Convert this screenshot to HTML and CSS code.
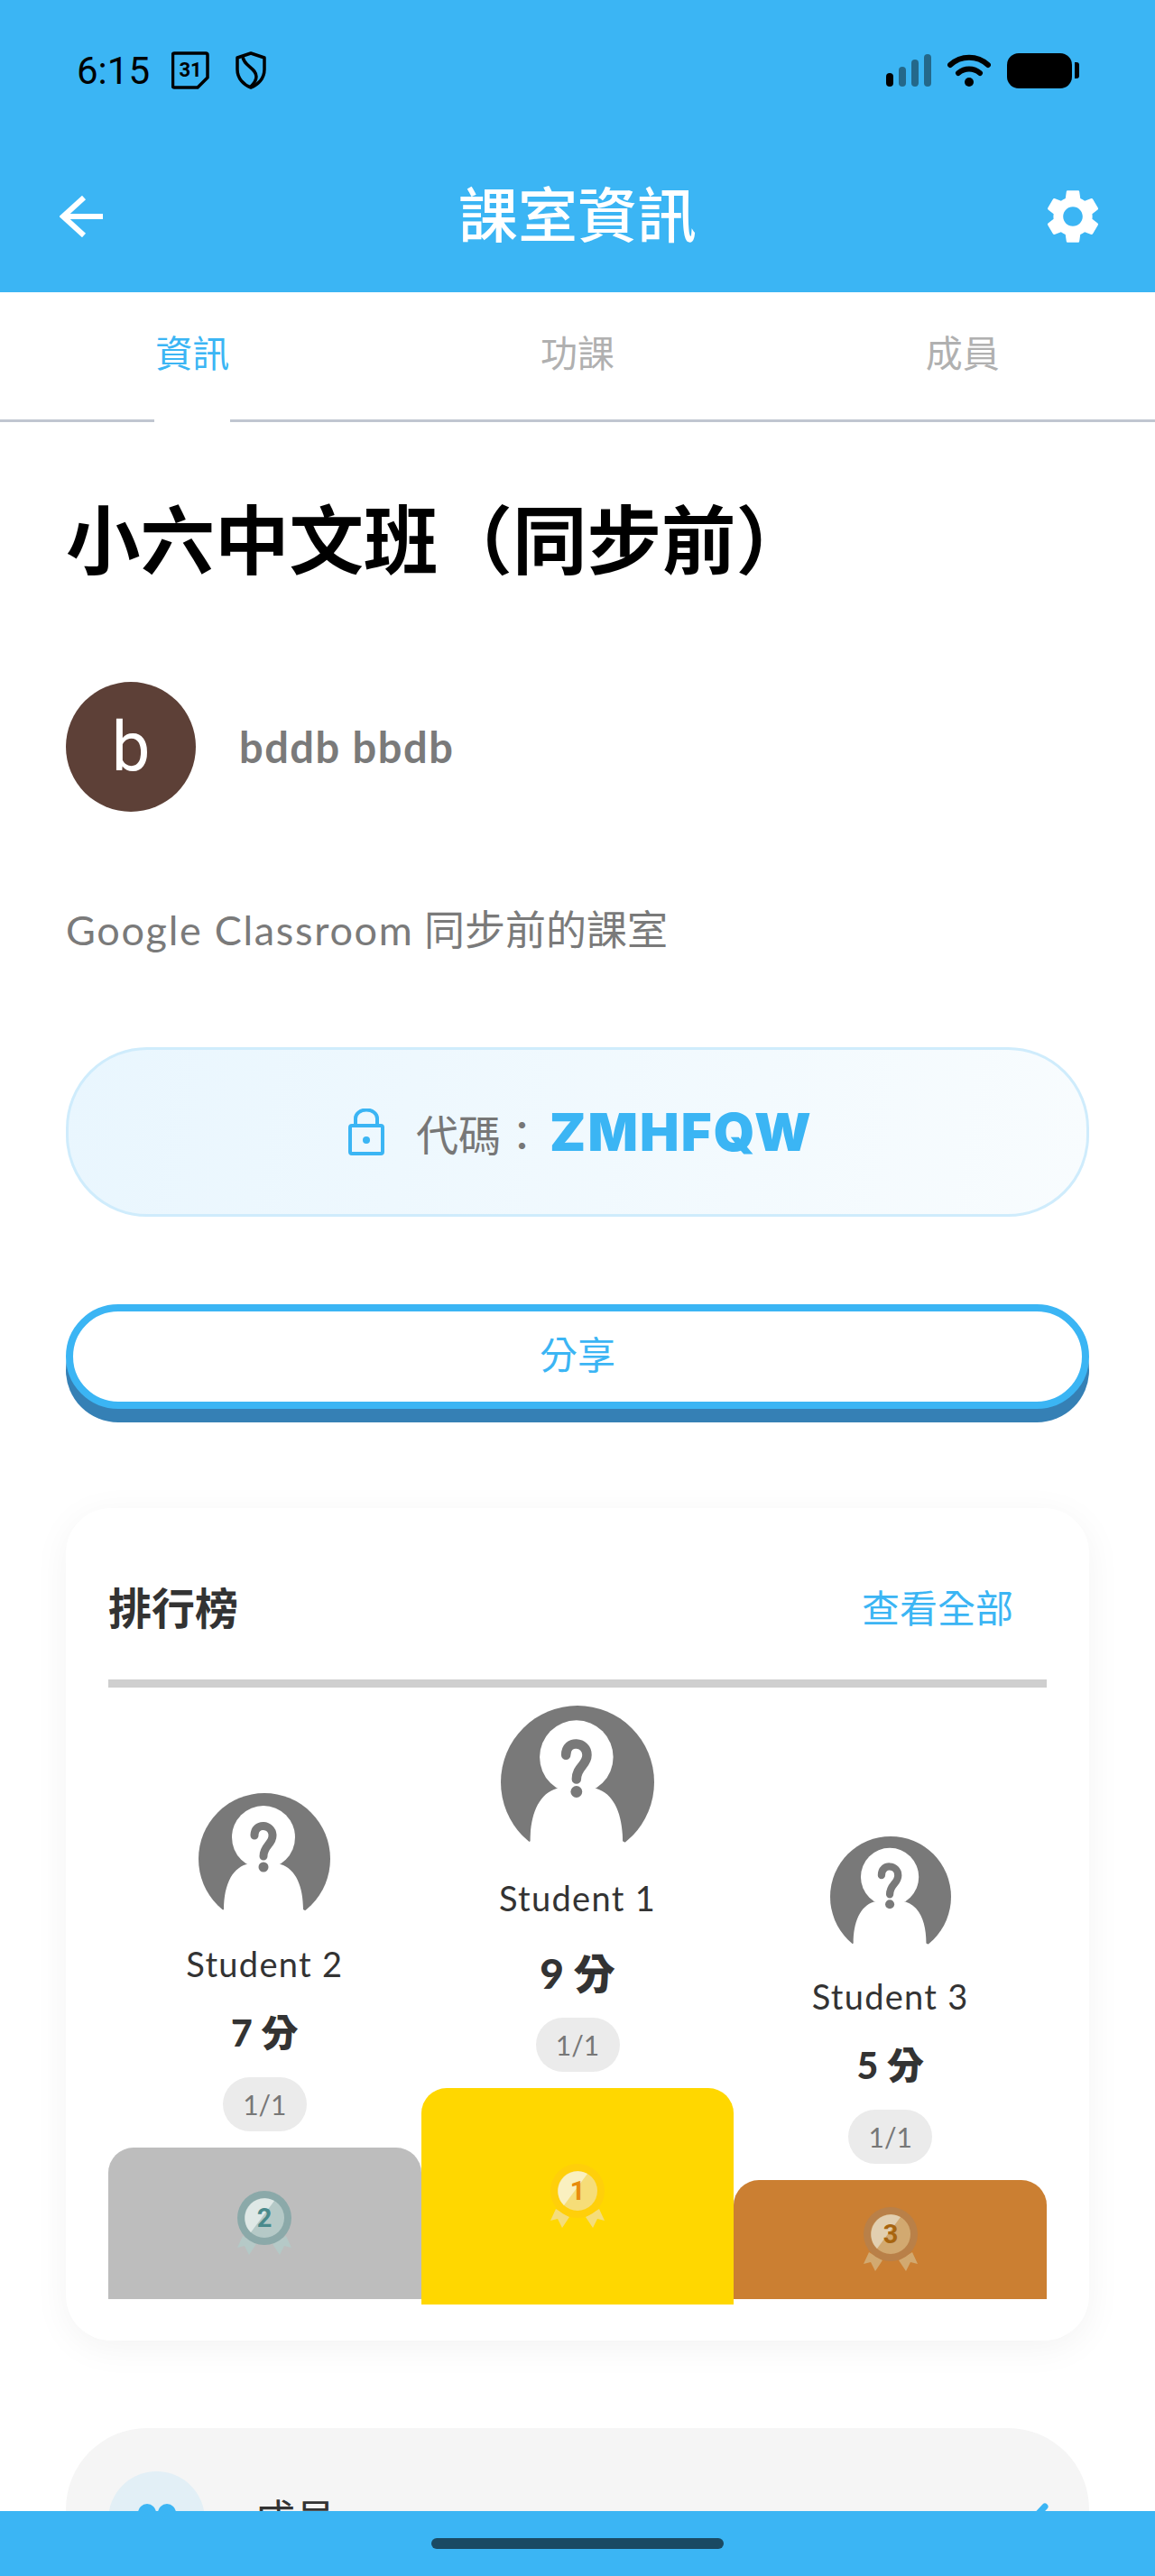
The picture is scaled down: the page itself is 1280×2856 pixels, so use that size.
FILE: index.html
```html
<!DOCTYPE html>
<html lang="zh-Hant">
<head>
    <meta charset="UTF-8">
    <meta name="viewport" content="width=device-width, initial-scale=1.0">
    <title>課室資訊</title>
    <link rel="stylesheet" href="styles.css">
</head>
<body>
    <header class="topbar">
        <div class="status">
            <div class="status-left">
                <span class="clock">6:15</span>
                <svg class="cal-icon" viewBox="0 0 42 42">
                    <path d="M3 2h35a2 2 0 0 1 2 2v25L29 40H3a1.500 1.500 0 0 1-1.500-1.500V3.500A1.500 1.500 0 0 1 3 2z" fill="none" stroke="#000" stroke-width="3.500" stroke-linejoin="round"/>
                    <text x="21" y="28" text-anchor="middle" class="cal-text">31</text>
                </svg>
                <svg class="shield-icon" viewBox="0 0 36 42">
                    <path d="M18 2 L33 7 V20 C33 30 26 37 18 40 C10 37 3 30 3 20 V7 Z" fill="none" stroke="#000" stroke-width="3.500" stroke-linejoin="round"/>
                    <path d="M9 5 C9 16 24 18 24 28 C24 32 21 36 18 39" fill="none" stroke="#000" stroke-width="3.500"/>
                </svg>
            </div>
            <div class="status-right">
                <div class="signal">
                    <span class="bar bar-a"></span>
                    <span class="bar bar-b"></span>
                    <span class="bar bar-c"></span>
                    <span class="bar bar-d"></span>
                </div>
                <svg class="wifi-icon" viewBox="0 0 48 38">
                    <path d="M3 13 C15 2 33 2 45 13" fill="none" stroke="#000" stroke-width="6" stroke-linecap="round"/>
                    <path d="M12 22 C19 16 29 16 36 22" fill="none" stroke="#000" stroke-width="6" stroke-linecap="round"/>
                    <circle cx="24" cy="32" r="5"/>
                </svg>
                <div class="battery"></div>
                <div class="battery-tip"></div>
            </div>
        </div>
        <div class="appbar">
            <svg class="back-icon" viewBox="0 0 48 46">
                <path d="M48 23H5M27 2 4 23l23 21" fill="none" stroke="#fff" stroke-width="6"/>
            </svg>
            <h1 class="appbar-title">課室資訊</h1>
            <svg class="gear-icon" viewBox="0 0 24 24">
                <path fill="#fff" d="M19.140 12.940c.04-.3.06-.61.06-.94 0-.32-.02-.64-.07-.94l2.030-1.580c.18-.14.23-.41.12-.61l-1.920-3.320c-.12-.22-.37-.29-.59-.22l-2.390.96c-.5-.38-1.030-.7-1.620-.94l-.36-2.540c-.04-.24-.24-.41-.48-.41h-3.840c-.24 0-.43.17-.47.41l-.36 2.540c-.59.24-1.130.57-1.620.94l-2.390-.96c-.22-.08-.47 0-.59.22L2.740 8.870c-.12.21-.08.47.12.61l2.030 1.580c-.05.3-.09.63-.09.94s.02.64.07.94l-2.030 1.580c-.18.14-.23.41-.12.61l1.920 3.320c.12.22.37.29.59.22l2.390-.96c.5.38 1.030.7 1.620.94l.36 2.540c.05.24.24.41.48.41h3.840c.24 0 .44-.17.47-.41l.36-2.540c.59-.24 1.130-.56 1.620-.94l2.390.96c.22.08.47 0 .59-.22l1.920-3.320c.12-.22.07-.47-.12-.61l-2.010-1.580zM12 15.600c-1.980 0-3.600-1.620-3.600-3.600s1.620-3.600 3.600-3.600 3.600 1.620 3.600 3.600-1.620 3.600-3.600 3.600z"/>
            </svg>
        </div>
    </header>

    <nav class="tabs">
        <div class="tab active">資訊</div>
        <div class="tab">功課</div>
        <div class="tab">成員</div>
    </nav>

    <main class="content">
        <h2 class="class-title">小六中文班（同步前）</h2>

        <div class="owner">
            <div class="owner-avatar">b</div>
            <div class="owner-name">bddb bbdb</div>
        </div>

        <p class="desc"><span class="latin">Google Classroom</span> 同步前的課室</p>

        <div class="code-box">
            <svg class="lock-icon" viewBox="0 0 40 52">
                <path d="M8 19V11a12 9.500 0 0 1 24 0v8" fill="none" stroke="#3bb5f4" stroke-width="4"/>
                <rect x="2" y="19" width="36" height="31" rx="2" fill="none" stroke="#3bb5f4" stroke-width="4"/>
                <circle cx="20" cy="35" r="4" fill="#3bb5f4"/>
            </svg>
            <span class="code-label">代碼：</span>
            <span class="code-value">ZMHFQW</span>
        </div>

        <button class="share-btn">分享</button>

        <section class="board">
            <div class="board-head">
                <span class="board-title">排行榜</span>
                <span class="board-all">查看全部</span>
            </div>
            <div class="podium">
                <div class="place">
                    <svg class="student-pic pic-2" viewBox="0 0 146 146">
                        <circle cx="73" cy="73" r="73" fill="#797979"/>
                        <path d="M28 129C28 104 36 84 53 79H91C108 84 116 104 116 129L146 146H0Z" fill="#fff"/>
                        <circle cx="72" cy="49" r="35" fill="#fff"/>
                        <path d="M62 47C62 32 82 34 82 47 82 57 72 58 72 70" fill="none" stroke="#797979" stroke-width="9" stroke-linecap="round"/>
                        <circle cx="72" cy="82" r="5.500" fill="#797979"/>
                    </svg>
                    <div class="student-name">Student 2</div>
                    <div class="score">7 分</div>
                    <div class="done">1/1</div>
                    <div class="step step-silver">
                        <svg class="medal" viewBox="0 0 60 72">
                            <path class="m-ribbon" d="M6 50 0 63l8-2 5 10 8-12zM54 50l6 13-8-2-5 10-8-12z"/>
                            <circle class="m-ring" cx="30" cy="30" r="30"/>
                            <circle class="m-face" cx="30" cy="30" r="22"/>
                            <path class="m-shine" d="M41 11A22 22 0 0 0 15 46Z"/>
                            <text class="m-num" x="30" y="40" text-anchor="middle">2</text>
                        </svg>
                    </div>
                </div>
                <div class="place place-first">
                    <svg class="student-pic pic-1" viewBox="0 0 146 146">
                        <circle cx="73" cy="73" r="73" fill="#797979"/>
                        <path d="M28 129C28 104 36 84 53 79H91C108 84 116 104 116 129L146 146H0Z" fill="#fff"/>
                        <circle cx="72" cy="49" r="35" fill="#fff"/>
                        <path d="M62 47C62 32 82 34 82 47 82 57 72 58 72 70" fill="none" stroke="#797979" stroke-width="9" stroke-linecap="round"/>
                        <circle cx="72" cy="82" r="5.500" fill="#797979"/>
                    </svg>
                    <div class="student-name">Student 1</div>
                    <div class="score">9 分</div>
                    <div class="done">1/1</div>
                    <div class="step step-gold">
                        <svg class="medal" viewBox="0 0 60 72">
                            <path class="m-ribbon" d="M6 50 0 63l8-2 5 10 8-12zM54 50l6 13-8-2-5 10-8-12z"/>
                            <circle class="m-ring" cx="30" cy="30" r="30"/>
                            <circle class="m-face" cx="30" cy="30" r="22"/>
                            <path class="m-shine" d="M41 11A22 22 0 0 0 15 46Z"/>
                            <text class="m-num" x="30" y="40" text-anchor="middle">1</text>
                        </svg>
                    </div>
                </div>
                <div class="place">
                    <svg class="student-pic pic-3" viewBox="0 0 146 146">
                        <circle cx="73" cy="73" r="73" fill="#797979"/>
                        <path d="M28 129C28 104 36 84 53 79H91C108 84 116 104 116 129L146 146H0Z" fill="#fff"/>
                        <circle cx="72" cy="49" r="35" fill="#fff"/>
                        <path d="M62 47C62 32 82 34 82 47 82 57 72 58 72 70" fill="none" stroke="#797979" stroke-width="9" stroke-linecap="round"/>
                        <circle cx="72" cy="82" r="5.500" fill="#797979"/>
                    </svg>
                    <div class="student-name">Student 3</div>
                    <div class="score">5 分</div>
                    <div class="done">1/1</div>
                    <div class="step step-bronze">
                        <svg class="medal" viewBox="0 0 60 72">
                            <path class="m-ribbon" d="M6 50 0 63l8-2 5 10 8-12zM54 50l6 13-8-2-5 10-8-12z"/>
                            <circle class="m-ring" cx="30" cy="30" r="30"/>
                            <circle class="m-face" cx="30" cy="30" r="22"/>
                            <path class="m-shine" d="M41 11A22 22 0 0 0 15 46Z"/>
                            <text class="m-num" x="30" y="40" text-anchor="middle">3</text>
                        </svg>
                    </div>
                </div>
            </div>
        </section>

        <section class="members">
            <div class="members-icon">
                <svg viewBox="0 0 60 40" class="people-icon">
                    <circle cx="19" cy="13" r="10" fill="#3bb5f4"/>
                    <circle cx="41" cy="13" r="10" fill="#3bb5f4"/>
                </svg>
            </div>
            <span class="members-label">成員</span>
            <svg class="chevron" viewBox="0 0 30 50">
                <path d="M24 5 5 25l19 20" fill="none" stroke="#3bb5f4" stroke-width="7" stroke-linecap="round"/>
            </svg>
        </section>
    </main>

    <footer class="navbar">
        <div class="handle"></div>
    </footer>
</body>
</html>
```

FILE: styles.css
```css
* {
    box-sizing: border-box;
}
body {
    margin: 0;
    height: 100vh;
    overflow: hidden;
    display: flex;
    flex-direction: column;
    background-color: #fff;
    font-family: Lato, "Noto Sans CJK TC", sans-serif;
}
.topbar {
    background-color: #3bb5f4;
    flex: none;
}
.status {
    height: 156px;
    padding: 0 84px 0 85px;
    display: flex;
    justify-content: space-between;
    align-items: center;
}
.status-left {
    display: flex;
    align-items: center;
}
.clock {
    font-family: Roboto, sans-serif;
    font-size: 42px;
    width: 105px;
    color: #000;
}
.cal-icon {
    width: 42px;
    height: 42px;
    margin-right: 28px;
}
.cal-text {
    font-family: Roboto, sans-serif;
    font-size: 22px;
    font-weight: 700;
}
.shield-icon {
    width: 36px;
    height: 42px;
}
.status-right {
    display: flex;
    align-items: center;
}
.signal {
    display: flex;
    align-items: flex-end;
    gap: 6px;
    height: 36px;
    margin-right: 18px;
}
.bar {
    width: 8px;
    border-radius: 4px;
    background-color: #24688a;
}
.bar-a {
    height: 15px;
    background-color: #000;
}
.bar-b {
    height: 22px;
}
.bar-c {
    height: 30px;
}
.bar-d {
    height: 36px;
}
.wifi-icon {
    width: 48px;
    height: 38px;
    margin-right: 18px;
}
.battery {
    width: 72px;
    height: 39px;
    border-radius: 13px;
    background-color: #000;
}
.battery-tip {
    width: 5px;
    height: 18px;
    margin-left: 3px;
    border-radius: 0 3px 3px 0;
    background-color: #000;
}
.appbar {
    height: 168px;
    padding: 0 55px 0 66px;
    display: flex;
    justify-content: space-between;
    align-items: center;
    position: relative;
}
.appbar-title {
    position: absolute;
    left: 0;
    right: 0;
    top: 42px;
    margin: 0;
    text-align: center;
    font-size: 66px;
    line-height: 80px;
    font-weight: 500;
    color: #fff;
}
.back-icon {
    width: 48px;
    height: 46px;
}
.gear-icon {
    width: 72px;
    height: 72px;
}
.tabs {
    flex: none;
    height: 144px;
    display: flex;
    border-bottom: 3px solid #c0c6d0;
}
.tab {
    flex: 1;
    position: relative;
    padding-top: 39px;
    text-align: center;
    font-size: 41px;
    line-height: 58px;
    color: #b0b0b0;
}
.tab.active {
    color: #3bb5f4;
}
.tab.active::after {
    content: "";
    position: absolute;
    left: 50%;
    bottom: -3px;
    width: 84px;
    height: 3px;
    margin-left: -42px;
    background-color: #fff;
}
.content {
    flex: 1;
    min-height: 0;
    overflow: hidden;
    padding: 0 73px;
}
.class-title {
    margin: 81px 0 0;
    font-size: 82.500px;
    line-height: 100px;
    font-weight: 700;
    color: #000;
}
.owner {
    margin-top: 107px;
    display: flex;
    align-items: center;
}
.owner-avatar {
    width: 144px;
    height: 144px;
    border-radius: 50%;
    background-color: #5d4037;
    color: #fff;
    font-family: Roboto, sans-serif;
    font-size: 76px;
    line-height: 144px;
    text-align: center;
}
.owner-name {
    margin-left: 48px;
    font-size: 47px;
    font-weight: 700;
    letter-spacing: 1.500px;
    color: #7a7a7a;
}
.desc {
    margin: 101px 0 0;
    font-size: 45px;
    line-height: 60px;
    color: #7a7a7a;
}
.latin {
    letter-spacing: 1.700px;
}
.code-box {
    margin-top: 100px;
    height: 188px;
    padding-left: 7px;
    display: flex;
    justify-content: center;
    align-items: center;
    border: 3px solid #cfecfc;
    border-radius: 90px;
    background: linear-gradient(100deg, #e9f6fe, #f8fcfe);
}
.lock-icon {
    width: 40px;
    height: 52px;
    margin: -1px 35px 0 0;
}
.code-label {
    font-size: 47px;
    color: #777;
}
.code-value {
    margin-left: 7px;
    font-family: Inter, sans-serif;
    font-size: 58px;
    font-weight: 900;
    letter-spacing: 2.200px;
    color: #3bb5f4;
}
.share-btn {
    display: block;
    width: 100%;
    height: 116px;
    margin-top: 97px;
    padding: 0 0 10px;
    border: 8px solid #3bb5f4;
    border-radius: 58px;
    background-color: #fff;
    box-shadow: 0 15px 0 #3580b5;
    font-family: inherit;
    font-size: 42px;
    color: #3bb5f4;
}
.board {
    margin-top: 110px;
    padding: 0 47px 46px;
    border-radius: 50px;
    background-color: #fff;
    box-shadow: 0 8px 40px rgba(0, 0, 0, 0.05);
}
.board-head {
    padding: 81px 37px 49px 0;
    display: flex;
    justify-content: space-between;
    align-items: center;
    border-bottom: 9px solid #cfcfcf;
    line-height: 60px;
}
.board-title {
    font-size: 48px;
    font-weight: 700;
    color: #333;
}
.board-all {
    font-size: 42px;
    color: #3bb5f4;
}
.podium {
    margin-top: 20px;
    display: flex;
    align-items: flex-end;
}
.place {
    flex: 1;
    display: flex;
    flex-direction: column;
    align-items: center;
}
.place-first {
    margin-bottom: -6px;
}
.student-pic {
    display: block;
}
.pic-1 {
    width: 170px;
    height: 170px;
}
.pic-2 {
    width: 146px;
    height: 146px;
}
.pic-3 {
    width: 134px;
    height: 134px;
}
.student-name {
    margin-top: 18px;
    font-size: 38px;
    line-height: 50px;
    letter-spacing: 1.300px;
    color: #333;
}
.score {
    margin-top: 27px;
    font-size: 41px;
    line-height: 50px;
    font-weight: 900;
    color: #333;
}
.place-first .score {
    margin-top: 34px;
    font-size: 46px;
}
.done {
    width: 93px;
    height: 60px;
    margin: 24px 0 18px;
    border-radius: 30px;
    background-color: #ebebeb;
    font-size: 30px;
    line-height: 60px;
    text-align: center;
    color: #777;
}
.step {
    width: 100%;
    display: flex;
    justify-content: center;
    align-items: center;
    border-radius: 28px 28px 0 0;
}
.step-silver {
    height: 168px;
    background-color: #bdbdbd;
    --ribbon: #b5c9c7;
    --ring: #8ba9a9;
    --face: #b5c9c7;
    --shine: #dfe8e6;
    --num: #4a8a8c;
}
.step-gold {
    height: 240px;
    background-color: #ffd700;
    --ribbon: #f5dd7a;
    --ring: #ffcf0a;
    --face: #f6dd78;
    --shine: #faf0c0;
    --num: #e88c0c;
}
.step-bronze {
    height: 132px;
    background-color: #cb7f32;
    --ribbon: #d2a970;
    --ring: #b98048;
    --face: #d2a970;
    --shine: #e2cfb0;
    --num: #a8650f;
}
.medal {
    width: 60px;
    height: 72px;
}
.m-ribbon {
    fill: var(--ribbon);
}
.m-ring {
    fill: var(--ring);
}
.m-face {
    fill: var(--face);
}
.m-shine {
    fill: var(--shine);
}
.m-num {
    fill: var(--num);
    font-family: Roboto, sans-serif;
    font-size: 29px;
    font-weight: 700;
}
.members {
    margin-top: 97px;
    height: 300px;
    padding: 48px 43px 0 47px;
    display: flex;
    align-items: flex-start;
    border-radius: 90px;
    background-color: #f5f5f5;
}
.members-icon {
    width: 107px;
    height: 107px;
    padding-top: 33px;
    display: flex;
    justify-content: center;
    border-radius: 50%;
    background-color: #e2eff6;
}
.people-icon {
    width: 60px;
    height: 40px;
}
.members-label {
    flex: 1;
    margin-left: 55px;
    font-size: 45px;
    line-height: 106px;
    color: #333;
}
.chevron {
    width: 30px;
    height: 50px;
    margin-top: 34px;
}
.navbar {
    flex: none;
    height: 72px;
    padding-top: 30px;
    display: flex;
    justify-content: center;
    background-color: #3bb5f4;
}
.handle {
    width: 324px;
    height: 12px;
    border-radius: 6px;
    background-color: #1a4a63;
}
```
